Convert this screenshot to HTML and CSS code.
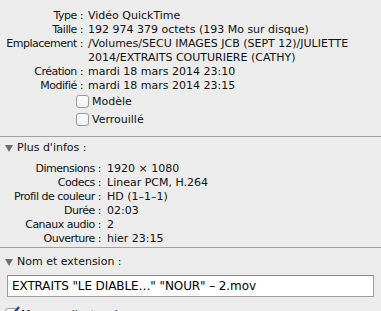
FILE: index.html
```html
<!DOCTYPE html>
<html lang="fr">
<head>
  <meta charset="UTF-8">
  <title>Infos</title>
  <link rel="stylesheet" href="styles.css">
</head>
<body>
  <div class="panel">
    <div class="general">
      <div class="row"><span class="label">Type :</span><span class="value">Vidéo QuickTime</span></div>
      <div class="row"><span class="label">Taille :</span><span class="value">192 974 379 octets (193 Mo sur disque)</span></div>
      <div class="row"><span class="label">Emplacement :</span><span class="value">/Volumes/SECU IMAGES JCB (SEPT 12)/JULIETTE<br>2014/EXTRAITS COUTURIERE (CATHY)</span></div>
      <div class="row"><span class="label">Création :</span><span class="value">mardi 18 mars 2014 23:10</span></div>
      <div class="row"><span class="label">Modifié :</span><span class="value">mardi 18 mars 2014 23:15</span></div>
      <label class="check first"><span class="box"></span>Modèle</label>
      <label class="check"><span class="box"></span>Verrouillé</label>
    </div>

    <div class="section">
      <div class="section-title"><span class="arrow"></span>Plus d'infos :</div>
      <div class="more">
        <div class="row"><span class="label">Dimensions :</span><span class="value">1920 × 1080</span></div>
        <div class="row"><span class="label">Codecs :</span><span class="value">Linear PCM, H.264</span></div>
        <div class="row"><span class="label">Profil de couleur :</span><span class="value">HD (1–1–1)</span></div>
        <div class="row"><span class="label">Durée :</span><span class="value">02:03</span></div>
        <div class="row"><span class="label">Canaux audio :</span><span class="value">2</span></div>
        <div class="row"><span class="label">Ouverture :</span><span class="value">hier 23:15</span></div>
      </div>
    </div>

    <div class="section">
      <div class="section-title name-title"><span class="arrow"></span>Nom et extension :</div>
      <div class="name-box">EXTRAITS "LE DIABLE…" "NOUR" – 2.mov</div>
      <label class="check hide-ext">
        <span class="box checked">
          <svg width="14" height="12" viewBox="0 0 14 12"><path d="M2 6 L5 9 L12 1" fill="none" stroke="#1c3f8a" stroke-width="2.2"/></svg>
        </span>Masquer l'extension
      </label>
    </div>
  </div>
</body>
</html>
```

FILE: styles.css
```css
body {
  margin: 0;
  background-color: #ececec;
  font-family: "DejaVu Sans", sans-serif;
  font-size: 11px;
  color: #111;
  overflow: hidden;
}

.panel {
  width: 381px;
  height: 311px;
  overflow: hidden;
}

.general {
  padding-top: 9px;
  padding-bottom: 9px;
}

.row {
  display: flex;
  line-height: 14px;
}

.label {
  flex: 0 0 auto;
  text-align: right;
  white-space: nowrap;
  letter-spacing: -0.5px;
}

.general .label {
  width: 83px;
  margin-right: 5px;
}

.more .label {
  width: 101px;
  margin-right: 6px;
}

.value {
  white-space: nowrap;
}

.check {
  display: flex;
  align-items: center;
  height: 16px;
  padding-left: 76px;
  margin-top: 1px;
}

.check.first {
  margin-top: 0;
}

.check + .check {
  margin-top: 2px;
}

.box {
  position: relative;
  width: 11px;
  height: 11px;
  border: 1px solid #9a9a9a;
  border-radius: 3px;
  background: linear-gradient(#ffffff, #f0f0f0);
  margin-right: 3px;
}

.section {
  border-top: 1px solid #a2a2a2;
}

.section-title {
  display: flex;
  align-items: center;
  padding-left: 5px;
  height: 14px;
  line-height: 14px;
  margin-top: 4px;
}

.section-title.name-title {
  margin-top: 7px;
}

.arrow {
  width: 0;
  height: 0;
  border-left: 4px solid transparent;
  border-right: 4px solid transparent;
  border-top: 7px solid #6f6f6f;
  margin-right: 4px;
}

.more {
  padding-top: 7px;
  padding-bottom: 1px;
}

.name-box {
  margin: 6px 7px 0 7px;
  height: 20px;
  line-height: 20px;
  padding-left: 4px;
  background-color: #fff;
  border: 1px solid #9c9c9c;
  border-top-color: #8a8a8a;
  font-size: 12px;
  letter-spacing: -0.1px;
  color: #000;
  white-space: nowrap;
}

.hide-ext {
  padding-left: 5px;
  margin-top: 9px;
}

.box.checked svg {
  position: absolute;
  left: 1px;
  top: -3px;
}
```
